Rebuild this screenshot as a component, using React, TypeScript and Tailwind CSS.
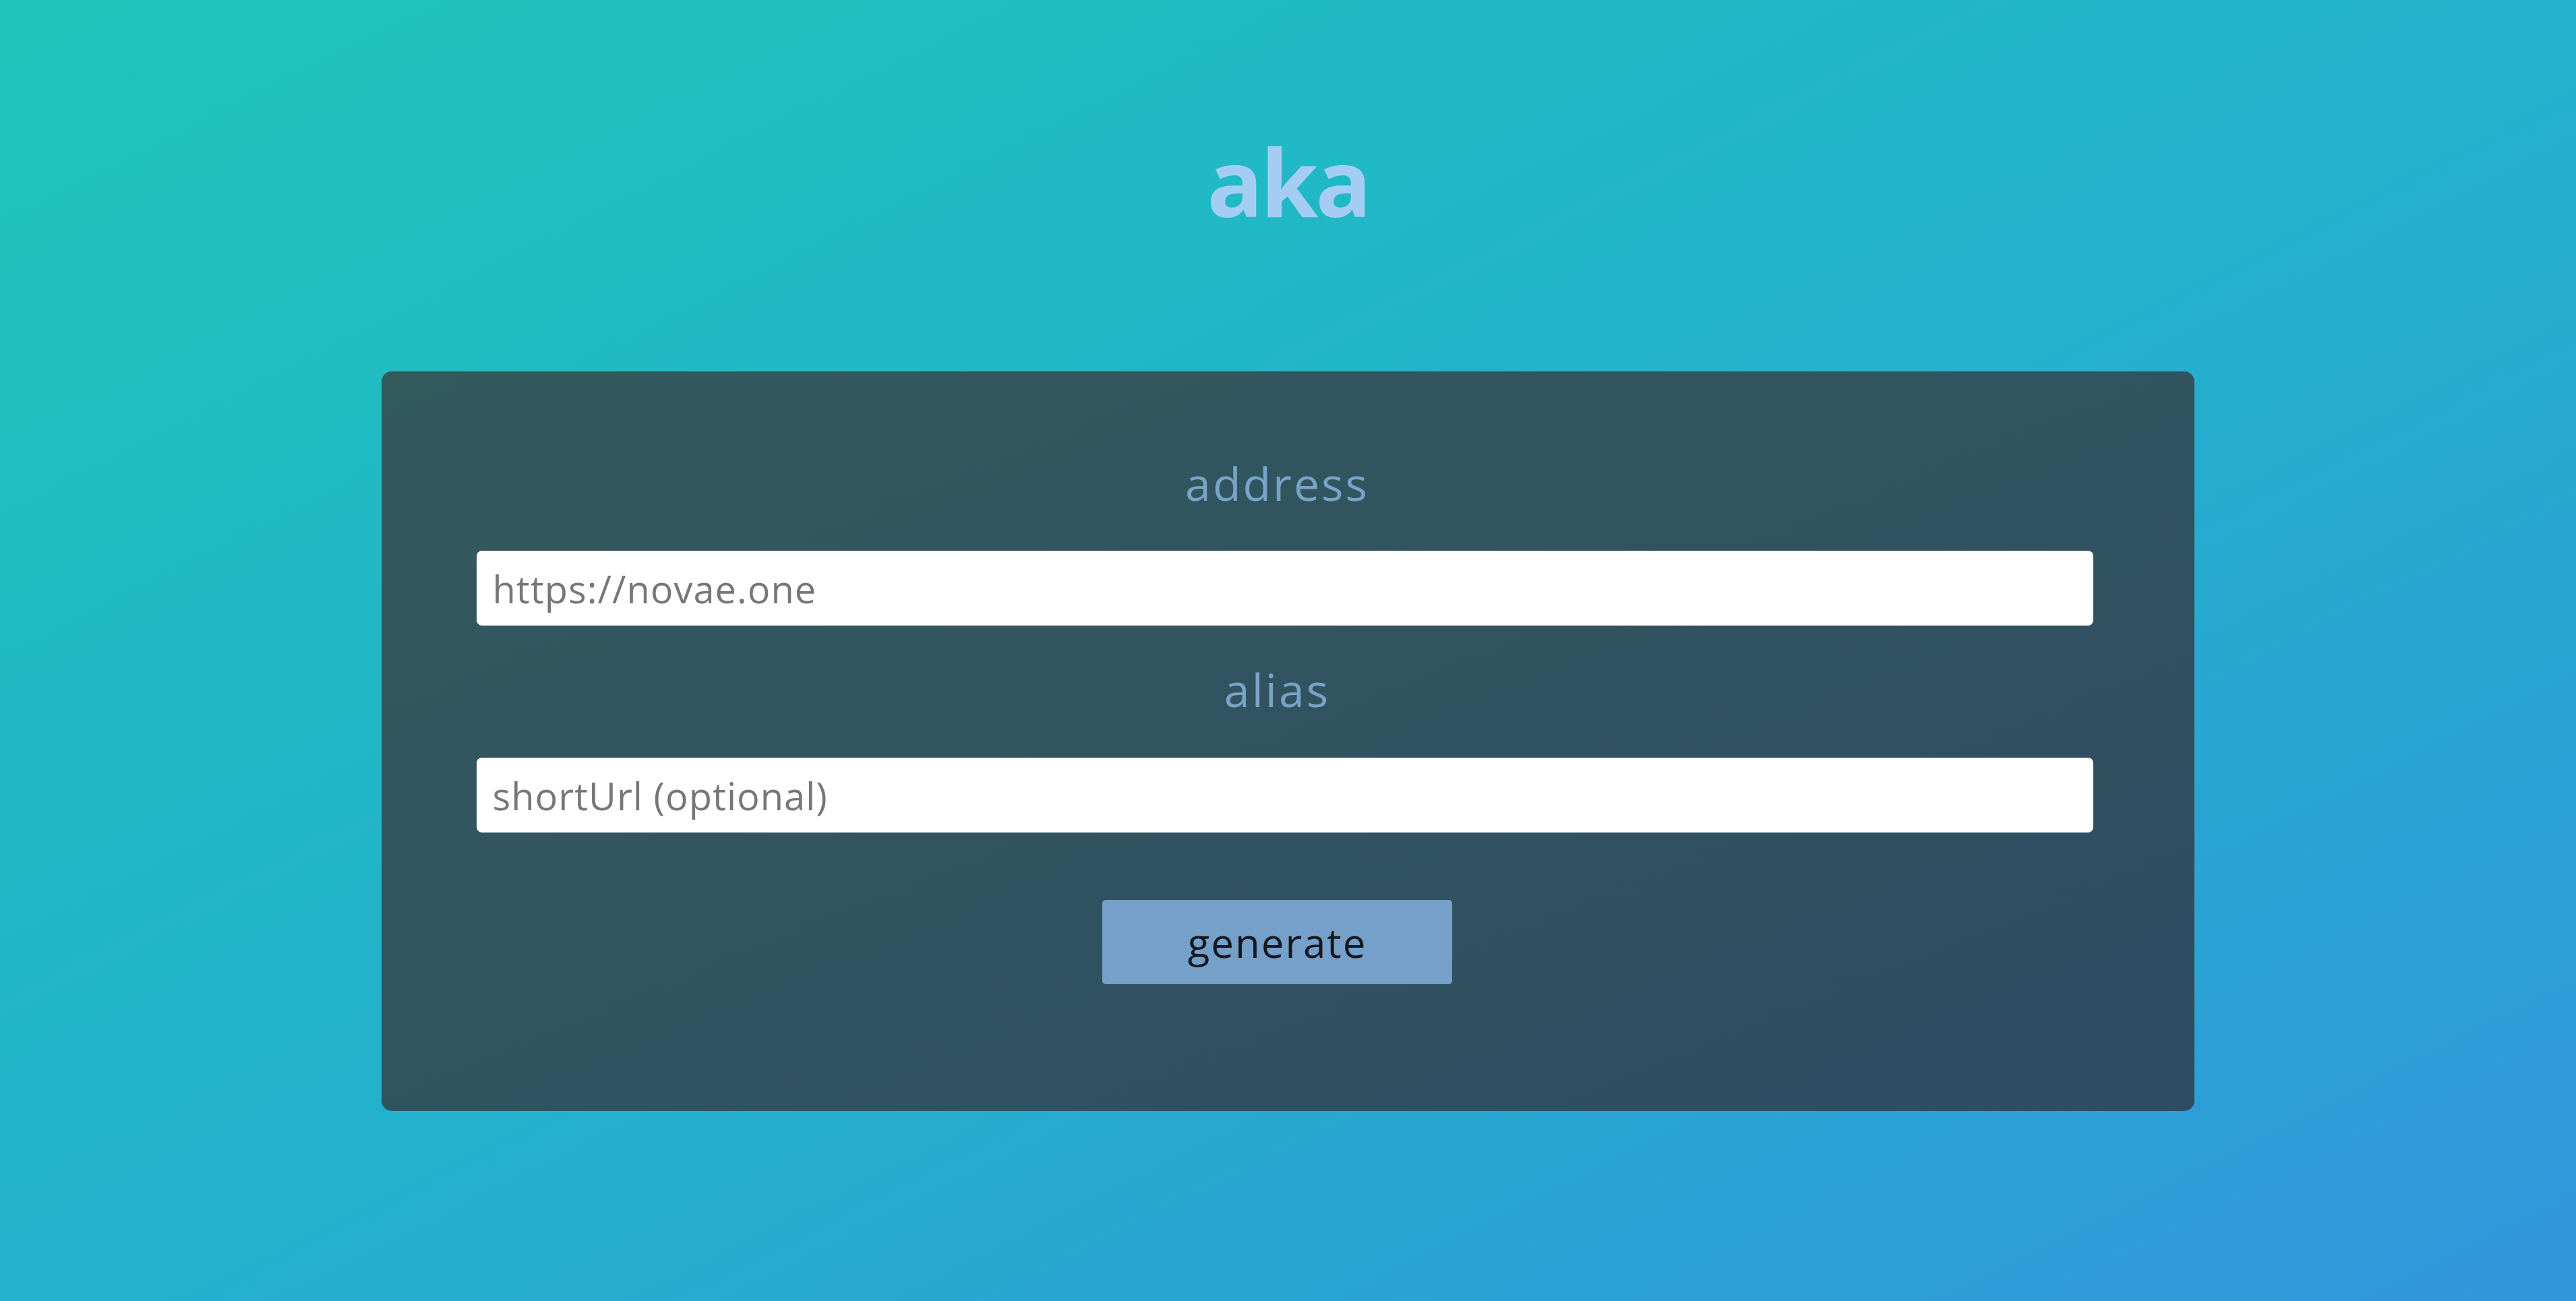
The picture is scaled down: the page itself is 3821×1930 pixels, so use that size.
import React from 'react';

const font = { fontFamily: '"Open Sans", "Noto Sans", sans-serif' };

export default function App() {
  return (
    <div
      className="min-h-screen w-full bg-gradient-to-br from-[#21c3b9] via-[#22b2cc] to-[#3196da] flex flex-col items-center"
      style={font}
    >
      <h1 className="mt-[199px] text-[138px] leading-none font-bold text-[#a5cdf4] tracking-[-4px]">
        aka
      </h1>

      <form
        className="mt-[214px] w-[2689px] rounded-[15px] bg-gradient-to-br from-[#335a5d] to-[#2f4c63] flex flex-col items-center pt-[132px] pb-[188px]"
        onSubmit={(e) => e.preventDefault()}
      >
        <label className="mr-[32px] text-[68px] leading-none text-[#7aa3c9] tracking-[3px]">address</label>
        <input
          className="mt-[66px] mr-[10px] h-[111px] w-[2398px] rounded-[8px] bg-white px-[24px] text-[56px] tracking-[1px] text-[#333] placeholder:text-[#777] outline-none"
          placeholder="https://novae.one"
        />
        <label className="mt-[61px] mr-[32px] text-[68px] leading-none text-[#7aa3c9] tracking-[3px]">alias</label>
        <input
          className="mt-[67px] mr-[10px] h-[111px] w-[2398px] rounded-[8px] bg-white px-[24px] text-[56px] tracking-[1px] text-[#333] placeholder:text-[#777] outline-none"
          placeholder="shortUrl (optional)"
        />
        <button
          type="submit"
          className="mt-[100px] mr-[32px] h-[125px] w-[519px] rounded-[5px] bg-[#74a0c9] text-[60px] leading-none text-[#14191f] tracking-[2px]"
        >
          generate
        </button>
      </form>
    </div>
  );
}
